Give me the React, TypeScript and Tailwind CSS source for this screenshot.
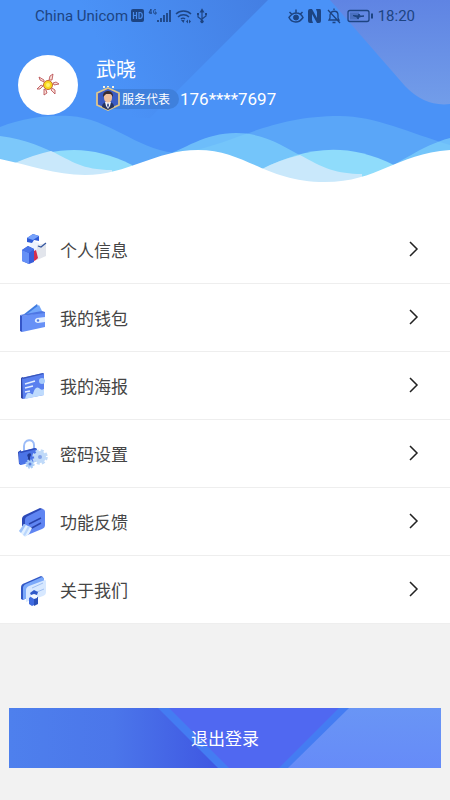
import React from 'react';

const MenuArt: React.FC<{ children: React.ReactNode }> = ({ children }) => (
  <svg viewBox="0 0 32 32" className="w-8 h-8 shrink-0" fill="none" aria-hidden="true">
    {children}
  </svg>
);

const ProfileArt = () => (
  <MenuArt>
    <path d="M12 8l4-1 5 2v5l-5 3-4-3z" fill="#eef3fd" />
    <path d="M9 4l6-4 6 2v5l-5-1-2 3-5-1z" fill="#2f5bd6" />
    <path d="M9 4l6-4 6 2-6 4z" fill="#76a2fb" />
    <path d="M16 16l4-2v10l-4 3z" fill="#ece9f3" />
    <path d="M19 11l9-2v13l-9 4z" fill="#e2e5ec" />
    <path d="M20 12l3 1 5-4" stroke="#34569f" strokeWidth="1.2" />
    <path d="M16 17l2-1 2 8-2 2-2 1z" fill="#d62d4c" />
    <path d="M4 16l6-4 6 3v13l-5 2-7-3z" fill="#3a5dd8" />
    <path d="M4 16l7 3v11l-7-3z" fill="#6590f6" />
    <path d="M4 16l6-4 6 3-5 4z" fill="#4a75e8" />
  </MenuArt>
);

const WalletArt = () => (
  <MenuArt>
    <path d="M5 13L19 2l3 7z" fill="#3f7ce0" />
    <path d="M9 12L21 3l3 6-3 3z" fill="#74a8fb" />
    <path d="M2 13l2 1v16l-2-1z" fill="#3556c8" />
    <path d="M4 14l23-4v15L4 30z" fill="#6790f6" />
    <path d="M2 13l22-4 3 1v1L4 14z" fill="#4e77e4" />
    <path d="M19 16l8-1v5l-7 1c-4 0-4-4-1-5z" fill="#e3efff" />
    <circle cx="20" cy="18.500" r="1.200" fill="#537ce5" />
  </MenuArt>
);

const PosterArt = () => (
  <MenuArt>
    <path d="M3 8l2-1v22l-2-1z" fill="#2f46a7" />
    <path d="M4 8l21-5 1 1v21L5 29z" fill="#5a80ef" />
    <path d="M3 8l22-5 1 1L5 9z" fill="#3a56bb" />
    <path d="M7 14l10-3M7 18l8-2M7 22l5-1" stroke="#e3eeff" strokeWidth="1.500" />
    <path d="M7 29c1-4 2-7 5-6 1 0 2 2 3 1 1-4 3-8 6-6 2 2 3 2 5 1v6z" fill="#bfdbfd" />
    <circle cx="24" cy="11" r="3" fill="#a8ccfb" />
  </MenuArt>
);

const LockArt = () => (
  <MenuArt>
    <path d="M6 13V8c0-7 10-8 10-1v5" stroke="#9dbdf8" strokeWidth="2" />
    <path d="M0 14l3-2v15l-2-1z" fill="#2947ba" />
    <path d="M1 14l16-4 2 1v12L3 27l-2-2z" fill="#4b74e7" />
    <path d="M1 14l16-4 2 1L3 15z" fill="#2e4cba" />
    <path d="M10 16c3-2 4 1 2 3v4l-2 1v-5c-1-1-1-2 0-3z" fill="#213a94" />
    <circle cx="22" cy="19" r="4" fill="#7f9fe8" stroke="#c0daf9" strokeWidth="4" />
    <circle cx="22" cy="19" r="6.500" stroke="#c0daf9" strokeWidth="2.500" strokeDasharray="3 2.100" />
    <circle cx="12" cy="26" r="2.500" fill="#5c80df" stroke="#a9ccf7" strokeWidth="2" />
    <circle cx="12" cy="26" r="4" stroke="#a9ccf7" strokeWidth="1.200" strokeDasharray="2 1.100" />
  </MenuArt>
);

const FeedbackArt = () => (
  <MenuArt>
    <path d="M4 13c0-2 1-3 3-4L22 2l3 1v16L7 27l-3-1z" fill="#2c49b7" />
    <path d="M7 14c0-2 1-3 3-4l14-7c2 0 3 1 3 3v13c0 2-1 3-3 4L7 30z" fill="#5f85f2" />
    <path d="M11 18l12-6M12 23l11-6" stroke="#2944ac" strokeWidth="1.500" />
    <path d="M1 25l5-7 8 4-3 6-4 3z" fill="#e1f0ff" />
    <path d="M1 25l5-7 2 1-5 8z" fill="#9dc1f9" />
    <path d="M5 29l5-9 2 1-5 9z" fill="#b9d6fd" />
  </MenuArt>
);

const AboutArt = () => (
  <MenuArt>
    <path d="M3 14c0-3 1-4 4-5l16-7 2 1v12L5 26l-2-1z" fill="#3157c5" />
    <path d="M5 14c0-2 1-3 3-4l16-7 2 1v12L5 26z" fill="#7ba9fa" />
    <path d="M8 16c0-2 1-3 3-4l16-6c1 0 1 1 1 3v9c0 2-1 3-3 4L8 28z" fill="#d7e8ff" />
    <path d="M14 14l11-5M19 18l7-3" stroke="#9fbff2" />
    <path d="M11 24l3-2 2 2v7l-2 1-3-2z" fill="#3f6be0" />
    <path d="M16 24l4-1v7l-4 2z" fill="#2a50b8" />
    <path d="M13 20l3-1 3 2v3l-3 1-3-2z" fill="#f4f8ff" />
    <path d="M12 19l4-3 4 2-1 3-3-1-3 1z" fill="#2f59c9" />
  </MenuArt>
);

const menuItems = [
  { label: '个人信息', Art: ProfileArt },
  { label: '我的钱包', Art: WalletArt },
  { label: '我的海报', Art: PosterArt },
  { label: '密码设置', Art: LockArt },
  { label: '功能反馈', Art: FeedbackArt },
  { label: '关于我们', Art: AboutArt },
];

const HeaderBackdrop = () => (
  <svg
    viewBox="0 0 450 216"
    preserveAspectRatio="none"
    className="absolute inset-0 w-full h-full"
    aria-hidden="true"
  >
    <defs>
      <linearGradient id="leftPanel" gradientUnits="userSpaceOnUse" x1="110" y1="70" x2="265" y2="0">
        <stop offset="0" stopColor="#4a92f7" />
        <stop offset="1" stopColor="#447fe3" />
      </linearGradient>
      <linearGradient id="rightPanel" x1="0" y1="0" x2="0" y2="1">
        <stop offset="0" stopColor="#5f84e3" />
        <stop offset="1" stopColor="#729de9" />
      </linearGradient>
    </defs>
    <rect width="450" height="216" fill="#4a92f7" />
    <path d="M0 0H268L150 118H0z" fill="url(#leftPanel)" />
    <path d="M330 0L405 86Q425 107 450 104V0z" fill="url(#rightPanel)" />
    <path d="M0 127C25 117 50 115 70 116C110 119 135 148 174 153V216H0z" fill="#5aa6f8" />
    <path d="M160 156C230 150 260 116 340 116C375 116 410 133 450 145V216H160z" fill="#5aa6f8" />
    <path d="M0 136C55 143 67 170 112 170V216H0z" fill="#7cc8fa" />
    <path d="M160 158C185 149 204 133 236 133C285 133 309 174 358 174V216H160z" fill="#86dafc" fillOpacity="0.6" />
    <path d="M380 171C400 164 420 146 450 138V216H380z" fill="#86dafc" fillOpacity="0.6" />
    <path d="M15 163C60 146 91 145 132 165V216H15z" fill="#8fdcfb" />
    <path d="M15 163Q33 155 51 151C72 161 82 170 112 170V216H15z" fill="#c9e8fb" />
    <path d="M262 169C300 150 342 139 394 165V216H262z" fill="#8fdcfb" />
    <path d="M262 169Q279 160 300 155C323 168 337 174 362 174V216H262z" fill="#c9e8fb" />
    <path
      d="M0 159C30 165 55 175 85 175C128 175 155 150 198 150C245 150 266 182 325 182C378 182 395 154 450 150V216H0z"
      fill="#fff"
    />
  </svg>
);

const StatusBar = () => (
  <div className="relative flex h-8 items-center justify-between px-[35px] text-[#1d4482] font-['Roboto',sans-serif]">
    <div className="flex items-center gap-[3px]">
      <span className="text-[15px] leading-5">China Unicom</span>
      <svg width="80" height="20" viewBox="0 0 80 20" fill="none" stroke="currentColor" aria-hidden="true">
        <rect x="0" y="3" width="13" height="13" rx="2" fill="currentColor" stroke="none" />
        <path d="M2.500 6v7M5.500 6v7M2.500 9.500h3M8 6.500v6h1c3 0 3-6 0-6z" stroke="#4a8eee" strokeWidth="1.200" />
        <path d="M20 3l-2 4h3M20 3v5M25 4c-3-2-3 4-1 4h1V6h-1" strokeWidth="1" />
        <path d="M27 16v-2M30 16v-4M33 16V9M36 16V7M39 16V4" strokeWidth="1.800" />
        <path d="M45 8c4-4 11-4 15 0M47 11c3-3 8-3 11 0M50 13c1-1 3-1 4 0" strokeWidth="1.500" />
        <path d="M50 14l2.500 3 1-3zM55 15.500l2-2v4zM58 13.500l2 2-2 2z" fill="currentColor" stroke="none" />
        <path d="M71 4v13M71 14l-4-3V8M71 13l4-3V8M69.500 6L71 3.500 72.500 6z" strokeWidth="1.200" />
        <circle cx="71" cy="15.500" r="1.300" fill="currentColor" />
        <path d="M66 7h2v2h-2zM74 7h2v2h-2z" fill="currentColor" stroke="none" />
      </svg>
    </div>
    <div className="flex items-center gap-1">
      <svg width="86" height="20" viewBox="0 0 86 20" fill="none" stroke="currentColor" aria-hidden="true">
        <path d="M1 11.500c4-6 11-6 14 0-4 6-11 6-14 0zM1.500 6l2.500 2.500M8 3.500v3.500M14.500 6L12 8.500" strokeWidth="1.500" />
        <circle cx="8" cy="11.500" r="2.500" fill="currentColor" />
        <path d="M20 5q0-2 2-2h2l5 9V6l-1-3h4q1 0 1 2v10q0 2-2 2h-2l-5-9v6l1 3h-3q-2 0-2-2z" fill="currentColor" stroke="none" />
        <path d="M41 14h10l-1-2V9c0-5-7-5-8 0v3zM46 4V2.500M44.500 16.500h3M40 4l12 13" strokeWidth="1.300" />
        <rect x="60" y="4.500" width="21" height="11" rx="2" strokeWidth="1.300" />
        <rect x="62" y="6.500" width="9" height="7" fill="currentColor" fillOpacity="0.35" stroke="none" />
        <path d="M65 9.500l5 .5 1-2 1 2h4l-5 1-1 2-1-2z" fill="currentColor" />
        <path d="M84 7.500v5" strokeWidth="2" />
      </svg>
      <span className="text-[15px] leading-5">18:20</span>
    </div>
  </div>
);

const RoleBadge = () => (
  <span className="relative flex h-5 items-center rounded-full bg-[#3f80dc] pl-[26px] pr-[9px] text-xs text-white">
    <svg viewBox="0 0 26 28" className="absolute -left-px bottom-[-2px] h-7 w-[26px]" aria-hidden="true">
      <path d="M8 3h2v2H8zM12 3h2v1h-2zM17 3h2v2h-2z" fill="#f4f0e0" />
      <path d="M13 5l11 5v12l-11 5-11-5V10z" fill="#3b5cc4" stroke="#dfc68c" strokeWidth="1.800" />
      <path d="M7 24c0-4 3-5 6-5s6 1 6 5l-6 3z" fill="#26335f" />
      <path d="M10 19h6l-1 4-2 3-2-3z" fill="#f4f5fa" />
      <path d="M9 13c0-3 8-3 8 0v2c0 6-8 6-8 0z" fill="#f0c09c" />
      <path d="M8 14c-1-8 11-8 10 0l-2-3h-5z" fill="#3b2d32" />
      <path d="M13 20l1 2-1 3-1-3z" fill="#2b3f7f" />
    </svg>
    服务代表
  </span>
);

const Avatar = () => (
  <div className="flex h-[60px] w-[60px] shrink-0 items-center justify-center rounded-full bg-white">
    <svg viewBox="0 0 24 24" className="h-6 w-6" aria-hidden="true">
      <g fill="#f9ded6" stroke="#b5474b" strokeWidth="0.800">
        <path d="M13 7l1-4 3-2-1 6zM17 10l3-1 3 2-5 1zM16 15l3 2v4l-4-4zM10 17l1 3-3 2v-6zM7 13l-3 3H1l4-4zM8 9L4 7 3 4l5 3z" />
      </g>
      <circle cx="12" cy="12" r="4.500" fill="#f7d91c" stroke="#c56a2c" />
      <circle cx="12" cy="12" r="2" fill="#fff36b" />
    </svg>
  </div>
);

const LogoutBackdrop = () => (
  <svg viewBox="0 0 432 60" preserveAspectRatio="none" className="absolute inset-0 h-full w-full" aria-hidden="true">
    <defs>
      <linearGradient id="logoutLeft" x1="0" y1="0" x2="1" y2="0">
        <stop offset="0" stopColor="#4e80ed" />
        <stop offset="0.5" stopColor="#4b76ea" />
        <stop offset="1" stopColor="#3f57e2" />
      </linearGradient>
      <linearGradient id="logoutRight" x1="0" y1="1" x2="0" y2="0">
        <stop offset="0" stopColor="#668bf8" />
        <stop offset="1" stopColor="#6995f5" />
      </linearGradient>
    </defs>
    <rect width="432" height="60" fill="#447cf2" />
    <path d="M0 0H149L209 60H0z" fill="url(#logoutLeft)" />
    <path d="M160 0H330L270 60H220z" fill="#5068f1" />
    <path d="M340 0H432V60H279z" fill="url(#logoutRight)" />
  </svg>
);

export default function App() {
  return (
    <div className="min-h-screen bg-[#f2f2f2] pb-8 font-['Noto_Sans_CJK_SC',sans-serif]">
      <header className="relative h-[216px] bg-white">
        <HeaderBackdrop />
        <StatusBar />
        <div className="relative flex gap-[18px] pl-[18px] pt-[23px]">
          <Avatar />
          <div>
            <h1 className="text-xl leading-7 text-white">武晓</h1>
            <div className="mt-1.5 flex items-center gap-px">
              <RoleBadge />
              <span className="font-['Roboto',sans-serif] text-[17px] leading-5 text-white">176****7697</span>
            </div>
          </div>
        </div>
      </header>

      <nav className="bg-white">
        {menuItems.map(({ label, Art }) => (
          <a
            key={label}
            href="#"
            className="flex h-[68px] items-center gap-[10px] border-b border-[#eeeeee] pl-[18px] pr-[30px] text-[#454545]"
          >
            <Art />
            <span className="flex-1 text-[17px] leading-6">{label}</span>
            <svg width="12" height="18" viewBox="0 0 12 18" fill="none" aria-hidden="true">
              <path d="M2 1l7 7-7 7" stroke="#222" strokeWidth="1.500" />
            </svg>
          </a>
        ))}
      </nav>

      <div className="px-[9px] pt-[84px]">
        <button type="button" className="relative h-[60px] w-full text-[17px] text-white">
          <LogoutBackdrop />
          <span className="relative">退出登录</span>
        </button>
      </div>
    </div>
  );
}
